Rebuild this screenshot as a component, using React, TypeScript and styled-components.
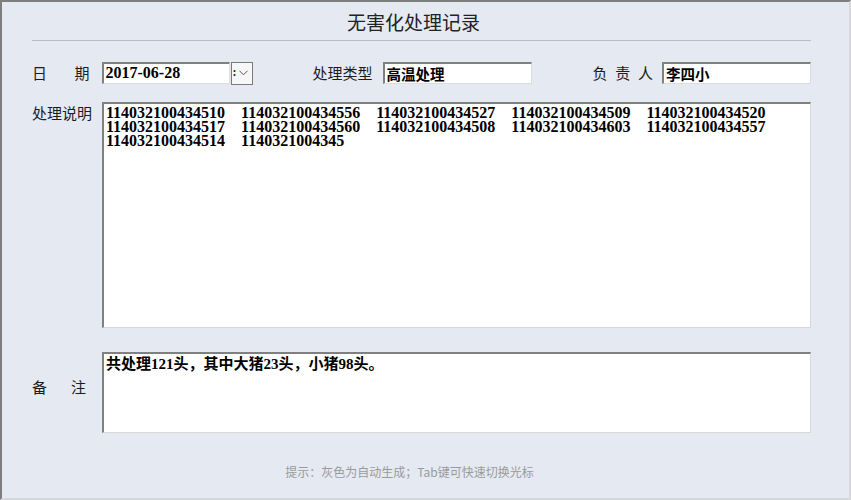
import styled, { createGlobalStyle } from 'styled-components';

const numbers = [
  '114032100434510', '114032100434556', '114032100434527', '114032100434509', '114032100434520',
  '114032100434517', '114032100434560', '114032100434508', '114032100434603', '114032100434557',
  '114032100434514', '1140321004345'
];

const App = () => {
  return (
    <>
      <GlobalStyle />
      <Frame>
        <Header>
          <Title>无害化处理记录</Title>
        </Header>

        <Row>
          <Label $width={58}>
            <span>日</span>
            <span>期</span>
          </Label>
          <DateBox>
            <TextInput $width={128} $fontSize={16} readOnly value="2017-06-28" />
            <DropButton>
              <Stub>:</Stub>
              <svg width="9" height="6" viewBox="0 0 9 6">
                <polyline points="0.5,0.8 4.5,4.8 8.5,0.8" fill="none" stroke="#555" strokeWidth="1" />
              </svg>
            </DropButton>
          </DateBox>
          <Label $offset={60} $width={60}>处理类型</Label>
          <TextInput $offset={10} $width={149} $fontSize={14.5} readOnly value="高温处理" />
          <Label $offset={61} $width={61}>
            <span>负</span>
            <span>责</span>
            <span>人</span>
          </Label>
          <TextInput $offset={9} $width={149} $fontSize={14.5} readOnly value="李四小" />
        </Row>

        <BlockRow $top={18}>
          <BlockLabel $width={58}>处理说明</BlockLabel>
          {/* serif spaces are 4px, so four of them give the two-column gap */}
          <MemoBox $height={226} $fontSize={16} $lineHeight={13.8} readOnly value={numbers.join('    ')} />
        </BlockRow>

        <BlockRow $top={24}>
          <BlockLabel $width={54} $padTop={24}>
            <span>备</span>
            <span>注</span>
          </BlockLabel>
          <MemoBox $height={81} $fontSize={15} $lineHeight={17} readOnly value="共处理121头，其中大猪23头，小猪98头。" />
        </BlockRow>

        <Hint>提示：灰色为自动生成；Tab键可快速切换光标</Hint>
      </Frame>
    </>
  );
};

export default App;

const GlobalStyle = createGlobalStyle`
  html, body {
    margin: 0;
    padding: 0;
    background: #e5e9f2;
  }
  * {
    box-sizing: border-box;
  }
`;

const Frame = styled.div`
  width: 851px;
  height: 500px;
  padding: 0 38px 0 30px;
  background-color: #e5e9f2;
  border-top: 2px solid #7e7e7e;
  border-left: 2px solid #7e7e7e;
  border-right: 2px solid #d6d8dc;
  border-bottom: 2px solid #d6d8dc;
  font-family: "Noto Sans CJK SC", "Noto Sans", sans-serif;
  color: #1c1c1c;
`;

const Header = styled.div`
  height: 39px;
  padding: 7px 16px 0 0;
  border-bottom: 1px solid #b9bdc5;
  text-align: center;
`;

const Title = styled.h1`
  margin: 0;
  font-size: 19px;
  font-weight: 400;
  line-height: 26px;
  color: #222;
`;

const Row = styled.div`
  display: flex;
  align-items: center;
  height: 22px;
  margin-top: 21px;
`;

const Label = styled.div<{ $width: number; $offset?: number }>`
  display: flex;
  justify-content: space-between;
  width: ${(p) => p.$width}px;
  margin-left: ${(p) => p.$offset ?? 0}px;
  font-size: 15px;
  line-height: 22px;
  white-space: nowrap;
`;

const DateBox = styled.div`
  display: flex;
  margin-left: 12px;
`;

const TextInput = styled.input<{ $width: number; $fontSize: number; $offset?: number }>`
  width: ${(p) => p.$width}px;
  height: 22px;
  margin: 0 0 0 ${(p) => p.$offset ?? 0}px;
  padding: 0 0 0 2px;
  background: #fff;
  border-top: 2px solid #808080;
  border-left: 2px solid #808080;
  border-right: 1px solid #dcdcdc;
  border-bottom: 1px solid #dcdcdc;
  outline: none;
  font-family: "Liberation Serif", "Noto Sans CJK SC", serif;
  font-size: ${(p) => p.$fontSize}px;
  font-weight: 700;
  color: #000;
`;

const DropButton = styled.div`
  position: relative;
  display: flex;
  align-items: center;
  justify-content: center;
  width: 22px;
  height: 23px;
  margin-left: 1px;
  padding-left: 4px;
  background: #f7f7f7;
  border: 1px solid #7a7a7a;
`;

const Stub = styled.span`
  position: absolute;
  left: 1px;
  top: 2px;
  font-family: "Liberation Serif", serif;
  font-size: 12px;
  font-weight: 700;
  color: #222;
`;

const BlockRow = styled.div<{ $top: number }>`
  display: flex;
  align-items: flex-start;
  margin-top: ${(p) => p.$top}px;
`;

const BlockLabel = styled.div<{ $width: number; $padTop?: number }>`
  display: flex;
  justify-content: space-between;
  width: ${(p) => p.$width}px;
  margin-right: ${(p) => 70 - p.$width}px;
  padding-top: ${(p) => p.$padTop ?? 0}px;
  font-size: 15px;
  line-height: 22px;
  white-space: nowrap;
`;

const MemoBox = styled.textarea<{ $height: number; $fontSize: number; $lineHeight: number }>`
  display: block;
  width: 710px;
  height: ${(p) => p.$height}px;
  margin: 0;
  padding: 2px 2px 0 2px;
  background: #fff;
  border-top: 2px solid #808080;
  border-left: 2px solid #808080;
  border-right: 1px solid #d8d8d8;
  border-bottom: 1px solid #d8d8d8;
  outline: none;
  resize: none;
  overflow: hidden;
  white-space: pre-wrap;
  font-family: "Liberation Serif", "Noto Sans CJK SC", serif;
  font-size: ${(p) => p.$fontSize}px;
  line-height: ${(p) => p.$lineHeight}px;
  font-weight: 700;
  color: #000;
`;

const Hint = styled.div`
  margin-top: 31px;
  padding-right: 24px;
  text-align: center;
  font-size: 12px;
  line-height: 16px;
  color: #9a9a9a;
`;
